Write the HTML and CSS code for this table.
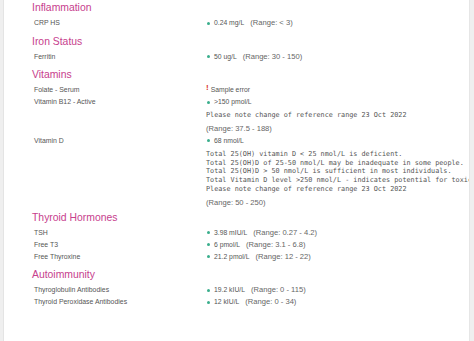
FILE: index.html
```html
<!DOCTYPE html>
<html>
<head>
<meta charset="utf-8">
<link rel="stylesheet" href="styles.css">
</head>
<body>
<main class="report">
  <section class="panel">
    <h2 class="panel-title">Inflammation</h2>
    <div class="result">
      <div class="result-name">CRP HS</div>
      <div class="result-body">
        <div class="result-value"><span class="dot"></span><span class="num">0.24 mg/L</span><span class="range">(Range: &lt; 3)</span></div>
      </div>
    </div>
  </section>

  <section class="panel">
    <h2 class="panel-title">Iron Status</h2>
    <div class="result">
      <div class="result-name">Ferritin</div>
      <div class="result-body">
        <div class="result-value"><span class="dot"></span><span class="num">50 ug/L</span><span class="range">(Range: 30 - 150)</span></div>
      </div>
    </div>
  </section>

  <section class="panel">
    <h2 class="panel-title">Vitamins</h2>
    <div class="result">
      <div class="result-name">Folate - Serum</div>
      <div class="result-body">
        <div class="result-value"><span class="alert">!</span><span class="num">Sample error</span></div>
      </div>
    </div>
    <div class="result">
      <div class="result-name">Vitamin B12 - Active</div>
      <div class="result-body">
        <div class="result-value"><span class="dot"></span><span class="num">&gt;150 pmol/L</span></div>
        <pre class="note">Please note change of reference range 23 Oct 2022</pre>
        <div class="range-line">(Range: 37.5 - 188)</div>
      </div>
    </div>
    <div class="result">
      <div class="result-name">Vitamin D</div>
      <div class="result-body">
        <div class="result-value"><span class="dot"></span><span class="num">68 nmol/L</span></div>
        <pre class="note">Total 25(OH) vitamin D &lt; 25 nmol/L is deficient.
Total 25(OH)D of 25-50 nmol/L may be inadequate in some people.
Total 25(OH)D &gt; 50 nmol/L is sufficient in most individuals.
Total Vitamin D level &gt;250 nmol/L - indicates potential for toxicity.
Please note change of reference range 23 Oct 2022</pre>
        <div class="range-line">(Range: 50 - 250)</div>
      </div>
    </div>
  </section>

  <section class="panel panel-after-note">
    <h2 class="panel-title">Thyroid Hormones</h2>
    <div class="result">
      <div class="result-name">TSH</div>
      <div class="result-body">
        <div class="result-value"><span class="dot"></span><span class="num">3.98 mIU/L</span><span class="range">(Range: 0.27 - 4.2)</span></div>
      </div>
    </div>
    <div class="result">
      <div class="result-name">Free T3</div>
      <div class="result-body">
        <div class="result-value"><span class="dot"></span><span class="num">6 pmol/L</span><span class="range">(Range: 3.1 - 6.8)</span></div>
      </div>
    </div>
    <div class="result">
      <div class="result-name">Free Thyroxine</div>
      <div class="result-body">
        <div class="result-value"><span class="dot"></span><span class="num">21.2 pmol/L</span><span class="range">(Range: 12 - 22)</span></div>
      </div>
    </div>
  </section>

  <section class="panel">
    <h2 class="panel-title">Autoimmunity</h2>
    <div class="result">
      <div class="result-name">Thyroglobulin Antibodies</div>
      <div class="result-body">
        <div class="result-value"><span class="dot"></span><span class="num">19.2 kIU/L</span><span class="range">(Range: 0 - 115)</span></div>
      </div>
    </div>
    <div class="result">
      <div class="result-name">Thyroid Peroxidase Antibodies</div>
      <div class="result-body">
        <div class="result-value"><span class="dot"></span><span class="num">12 kIU/L</span><span class="range">(Range: 0 - 34)</span></div>
      </div>
    </div>
  </section>
</main>
</body>
</html>
```

FILE: styles.css
```css
html, body {
  margin: 0;
  padding: 0;
}
body {
  width: 474px;
  height: 341px;
  overflow: hidden;
  background: #efefef;
  font-family: "Liberation Sans", Arial, sans-serif;
  color: #555;
}
.report {
  box-sizing: border-box;
  width: 467px;
  height: 341px;
  margin-left: 3px;
  background: #fff;
  border-left: 1px solid #e4e4e4;
  border-right: 1px solid #e6e6e6;
  padding: 1px 0 0 30px;
  overflow: hidden;
}
.panel {
  margin-top: 5.5px;
}
.panel:first-child {
  margin-top: 0;
}
.panel-after-note {
  margin-top: 2px;
}
.panel-title {
  margin: 0 0 2px -2px;
  font-size: 10.4px;
  line-height: 14px;
  font-weight: normal;
  color: #c7408d;
}
.result {
  display: grid;
  grid-template-columns: 172px 1fr;
}
.result-name {
  font-size: 6.9px;
  line-height: 12px;
  color: #555;
}
.result-body {
  min-width: 0;
}
.result-value {
  display: flex;
  align-items: center;
  font-size: 6.8px;
  line-height: 12px;
  white-space: nowrap;
}
.dot {
  width: 3px;
  height: 3px;
  border-radius: 50%;
  background: #3aae8c;
  margin: 0 4px 0 1px;
  flex: none;
}
.alert {
  font-weight: bold;
  font-size: 8px;
  color: #d8342e;
  align-self: flex-start;
  line-height: 8px;
  margin: 0 2px 0 0;
}
.num {
  color: #555;
}
.range {
  margin-left: 6px;
  font-size: 7.6px;
  color: #666;
}
.note {
  margin: 3px 0 0 0;
  font-family: "DejaVu Sans Mono", monospace;
  font-size: 6.8px;
  line-height: 8.75px;
  color: #555;
  white-space: pre;
}
.range-line {
  margin-top: 3px;
  font-size: 7.6px;
  line-height: 12px;
  color: #666;
}
```
